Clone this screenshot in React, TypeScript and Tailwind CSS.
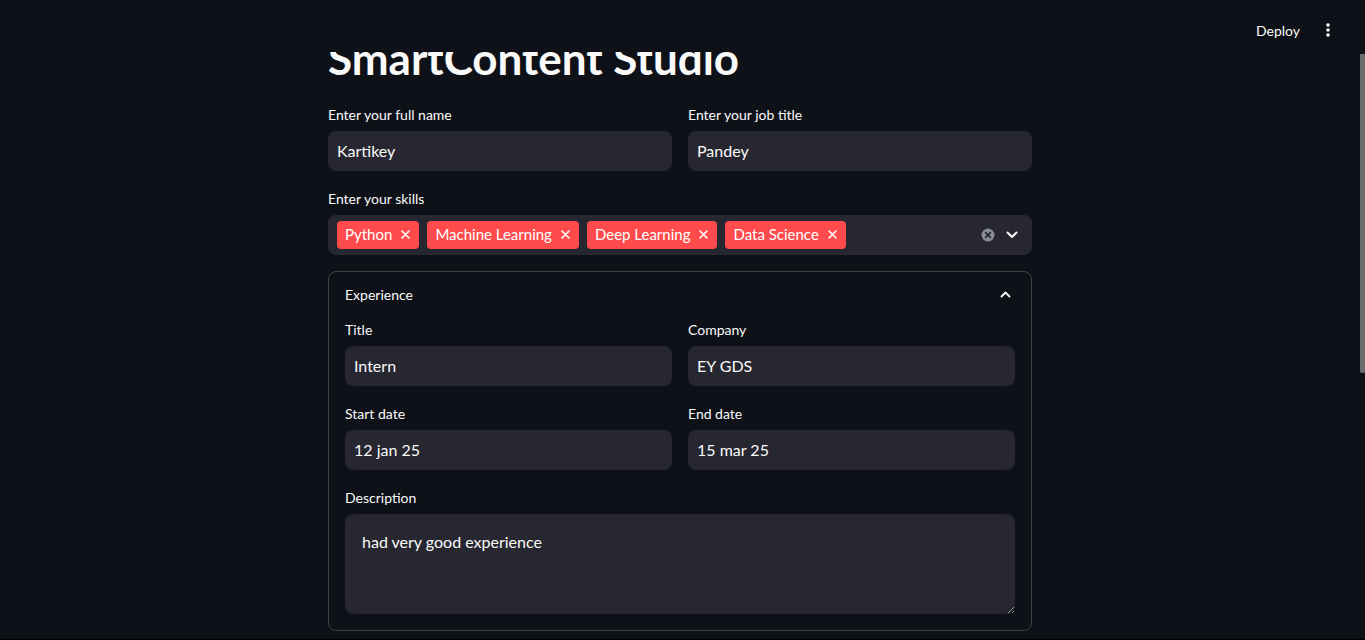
import React from "react";

const XIcon = () => (
  <svg width="9" height="9" viewBox="0 0 9 9" className="shrink-0">
    <path d="M1 1L8 8M8 1L1 8" stroke="#ffffff" strokeWidth="1.6" strokeLinecap="round" />
  </svg>
);

const Tag = ({ text }: { text: string }) => (
  <div className="h-[28px] rounded-[4px] bg-[#ff4b4b] flex items-center pl-[8px] pr-[9px] gap-[9px] text-white text-[15px] leading-none">
    <span>{text}</span>
    <XIcon />
  </div>
);

const Field = ({ label, value }: { label: string; value: string }) => (
  <div className="flex flex-col">
    <div className="h-[21px] text-[14px] leading-[20px] text-[#fafafa]">{label}</div>
    <div className="mt-[5px] h-[40px] rounded-[8px] bg-[#262730] flex items-center px-[9px] text-[16px] text-[#fafafa]">
      {value}
    </div>
  </div>
);

export default function App() {
  return (
    <div className="h-[640px] w-[1365px] overflow-hidden bg-black flex flex-col font-['Lato',sans-serif]">
      <div className="h-[639px] flex bg-[#0e1117] relative">
        <header className="absolute top-0 left-0 right-[5px] h-[52px] bg-[#0e1117] z-10">
          <div className="h-[60px] flex items-center justify-end pr-[30px]">
            <span className="text-[14px] text-[#fafafa]">Deploy</span>
            <svg width="4" height="14" viewBox="0 0 4 14" className="ml-[26px]">
              <circle cx="2" cy="2" r="1.8" fill="#fafafa" />
              <circle cx="2" cy="7" r="1.8" fill="#fafafa" />
              <circle cx="2" cy="12" r="1.8" fill="#fafafa" />
            </svg>
          </div>
        </header>
        <main className="flex-1 flex justify-center overflow-hidden">
          <div className="w-[704px] pt-[32px]">
            <h1 className="text-[44px] leading-[1.2] font-bold text-[#fafafa]">
              SmartContent Studio
            </h1>
            <div className="mt-[20px] grid grid-cols-2 gap-x-[16px]">
              <Field label="Enter your full name" value="Kartikey" />
              <Field label="Enter your job title" value="Pandey" />
            </div>
            <div className="mt-[18px] flex flex-col">
              <div className="h-[21px] text-[14px] leading-[20px] text-[#fafafa]">Enter your skills</div>
              <div className="mt-[5px] h-[40px] rounded-[8px] bg-[#262730] flex items-center pl-[9px] pr-[14px]">
                <div className="flex items-center gap-[8px] flex-1">
                  <Tag text="Python" />
                  <Tag text="Machine Learning" />
                  <Tag text="Deep Learning" />
                  <Tag text="Data Science" />
                </div>
                <svg width="14" height="14" viewBox="0 0 14 14">
                  <circle cx="7" cy="7" r="6.5" fill="#8b8d95" />
                  <path d="M4.6 4.6L9.4 9.4M9.4 4.6L4.6 9.4" stroke="#262730" strokeWidth="1.6" strokeLinecap="round" />
                </svg>
                <svg width="12" height="8" viewBox="0 0 12 8" className="ml-[11px]">
                  <path d="M1.5 1.5L6 6L10.5 1.5" stroke="#fafafa" strokeWidth="2" fill="none" strokeLinecap="round" strokeLinejoin="round" />
                </svg>
              </div>
            </div>
            <div className="mt-[16px] rounded-[8px] border border-[#3d3f45]">
              <div className="h-[46px] flex items-center justify-between pl-[16px] pr-[20px]">
                <span className="text-[14px] text-[#fafafa]">Experience</span>
                <svg width="11" height="7" viewBox="0 0 11 7">
                  <path d="M1.5 5.5L5.5 1.5L9.5 5.5" stroke="#fafafa" strokeWidth="1.8" fill="none" strokeLinecap="round" strokeLinejoin="round" />
                </svg>
              </div>
              <div className="px-[16px] pt-[2px] pb-[16px]">
                <div className="grid grid-cols-2 gap-x-[16px]">
                  <Field label="Title" value="Intern" />
                  <Field label="Company" value="EY GDS" />
                </div>
                <div className="mt-[18px] grid grid-cols-2 gap-x-[16px]">
                  <Field label="Start date" value="12 jan 25" />
                  <Field label="End date" value="15 mar 25" />
                </div>
                <div className="mt-[18px] flex flex-col">
                  <div className="h-[21px] text-[14px] leading-[20px] text-[#fafafa]">Description</div>
                  <textarea
                    className="mt-[5px] h-[100px] rounded-[8px] bg-[#262730] px-[17px] py-[16px] text-[16px] leading-[24px] text-[#fafafa] outline-none resize-y [color-scheme:dark] font-['Lato',sans-serif]"
                    defaultValue="had very good experience"
                  />
                </div>
              </div>
            </div>
          </div>
        </main>
        <div className="w-[5px] shrink-0">
          <div className="mt-[54px] h-[319px] bg-[#6b6b6b] rounded-b-[2px]" />
        </div>
      </div>
      <div className="h-[1px] bg-black" />
    </div>
  );
}
